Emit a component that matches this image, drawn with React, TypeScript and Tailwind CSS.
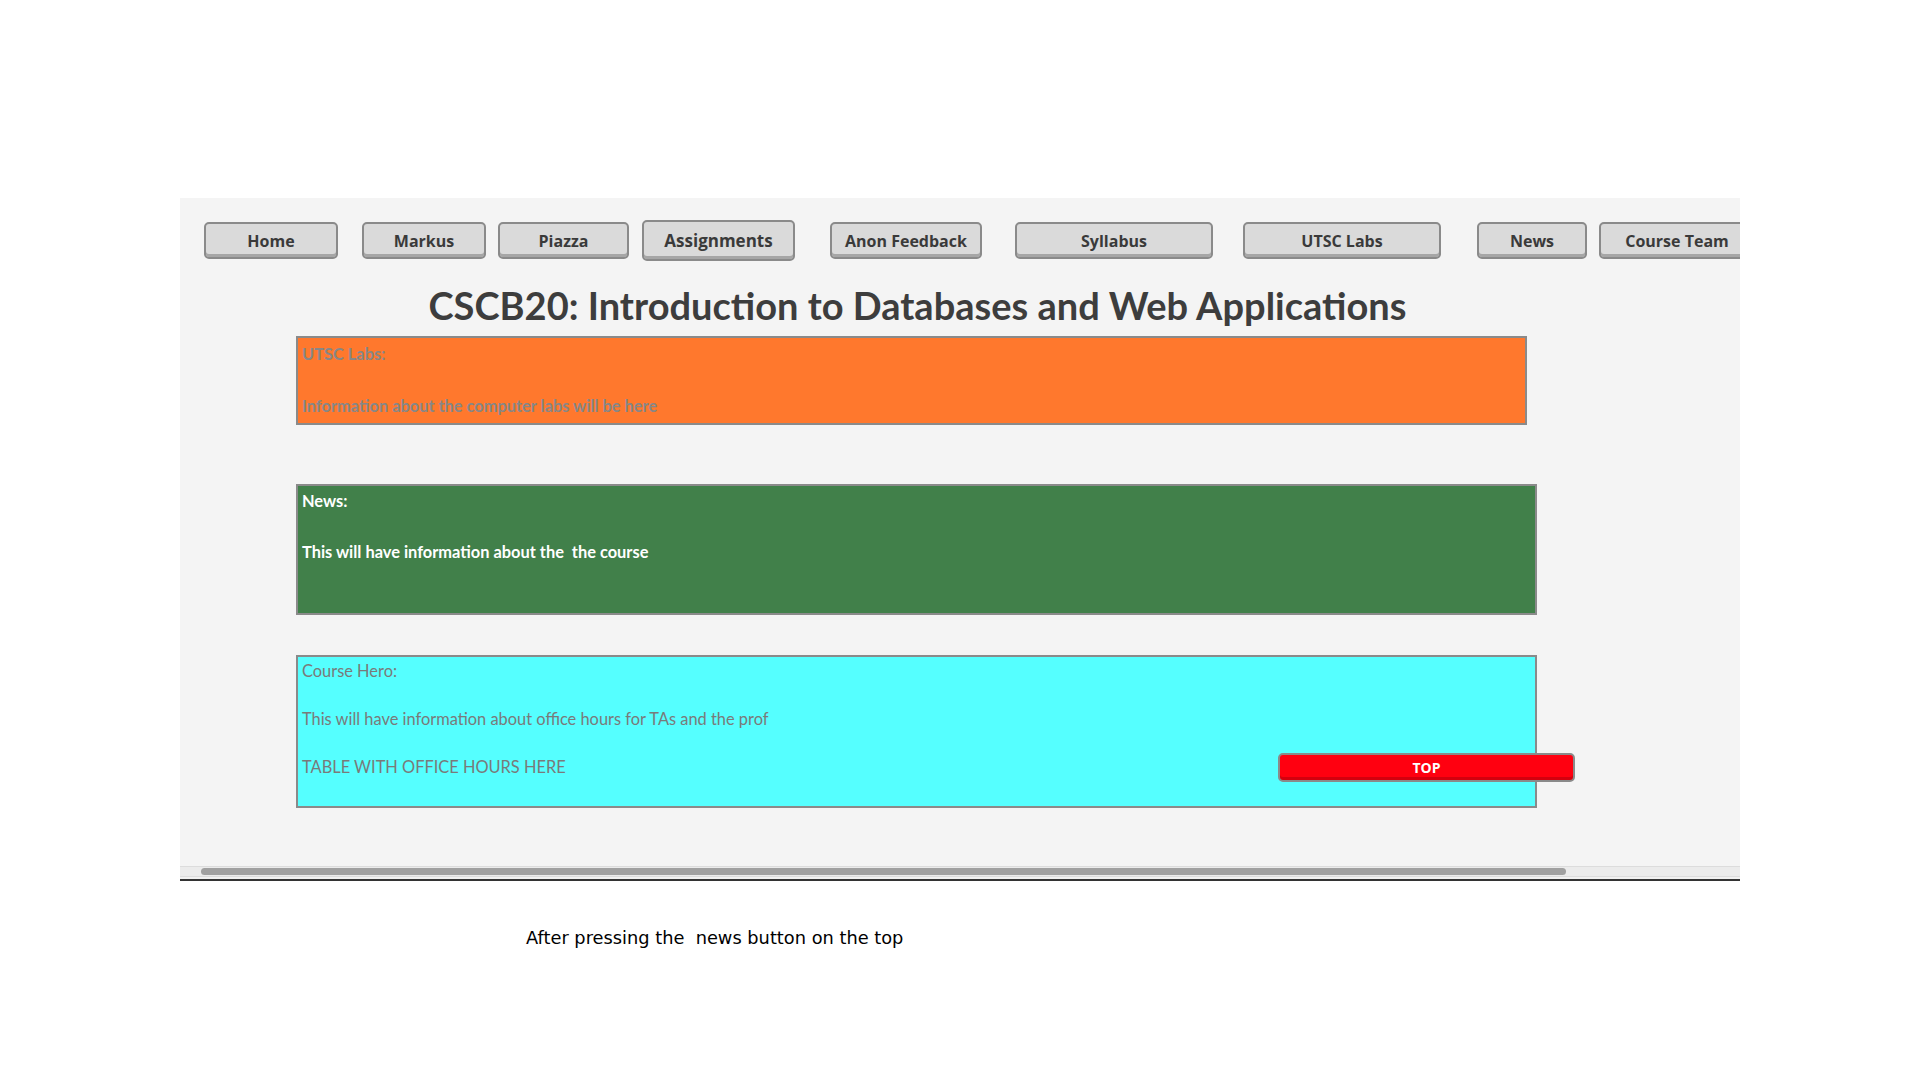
const navItems = [
  { label: "Home", cls: "ml-[24px] w-[134px]" },
  { label: "Markus", cls: "ml-[24px] w-[124px]" },
  { label: "Piazza", cls: "ml-[12px] w-[131px]" },
  { label: "Assignments", cls: "ml-[13px] w-[153px] h-[41px] -mt-[2px] text-[17px]" },
  { label: "Anon Feedback", cls: "ml-[35px] w-[152px]" },
  { label: "Syllabus", cls: "ml-[33px] w-[198px]" },
  { label: "UTSC Labs", cls: "ml-[30px] w-[198px]" },
  { label: "News", cls: "ml-[36px] w-[110px]" },
  { label: "Course Team", cls: "ml-[12px] w-[156px]" },
];

const NavButton = ({ label, cls }: { label: string; cls: string }) => (
  <button
    className={`h-[37px] shrink-0 rounded-[5px] border-2 border-[#8a8a8a] bg-[#dadada] font-['Open_Sans',sans-serif] text-[16px] font-bold text-[#3a3a3a] shadow-[inset_0_-3px_0_#a6a6a6] ${cls}`}
  >
    {label}
  </button>
);

const App = () => {
  return (
    <div className="h-[1080px] w-[1920px] overflow-hidden bg-white pl-[180px] pt-[198px]">
      <div className="w-[1560px]">
        {/* page content */}
        <div className="relative h-[668px] overflow-hidden bg-[#f4f4f4] font-['Lato',sans-serif]">
          <nav className="flex h-[63px] items-start pt-[24px]">
            {navItems.map((item) => (
              <NavButton key={item.label} label={item.label} cls={item.cls} />
            ))}
          </nav>

          <h1 className="mt-[24px] w-[1475px] text-center text-[38px] leading-[40px] font-bold text-[#3d3d3d]">
            CSCB20: Introduction to Databases and Web Applications
          </h1>

          {/* UTSC Labs */}
          <section className="ml-[116px] mt-[11px] h-[89px] w-[1231px] border-2 border-[#8a8a8a] bg-[#ff782d] pl-[4px] pt-[7px] text-[16.4px] leading-[18px] font-bold text-[#878787]">
            <p>UTSC Labs:</p>
            <p className="mt-[34px]">Information about the computer labs will be here</p>
          </section>

          {/* News */}
          <section className="ml-[116px] mt-[59px] h-[131px] w-[1241px] border-2 border-[#8a8a8a] bg-[#41804a] pl-[4px] pt-[6px] text-[16.4px] leading-[18px] font-bold whitespace-pre text-white">
            <p>News:</p>
            <p className="mt-[33px]">This will have information about the  the course</p>
          </section>

          {/* Course Hero */}
          <section className="ml-[116px] mt-[40px] h-[153px] w-[1241px] border-2 border-[#8a8a8a] bg-[#55ffff] pl-[4px] pt-[5px] text-[16.4px] leading-[18px] text-[#7a7a7a]">
            <p>Course Hero:</p>
            <p className="mt-[30px]">This will have information about office hours for TAs and the prof</p>
            <p className="mt-[30px]">TABLE WITH OFFICE HOURS HERE</p>
          </section>

          <button className="absolute left-[1098px] top-[555px] h-[29px] w-[297px] rounded-[5px] border-2 border-[#8a8a8a] bg-[#ff0010] font-['Open_Sans',sans-serif] text-[14px] font-bold text-white shadow-[inset_0_-3px_0_#d4000e]">
            TOP
          </button>
        </div>

        {/* horizontal scrollbar */}
        <div className="flex h-[11px] items-center border-y border-[#dcdcdc] bg-[#ebebeb] pl-[21px]">
          <div className="h-[7px] w-[1365px] rounded-full bg-[#a0a0a0]" />
        </div>
        <div className="h-[2px] bg-[#f0f0f0]" />
        <div className="h-[2px] bg-[#333333]" />
      </div>

      <p className="ml-[346px] mt-[44px] font-['DejaVu_Sans',sans-serif] text-[17.8px] whitespace-pre text-black">
        After pressing the  news button on the top
      </p>
    </div>
  );
};

export default App;
